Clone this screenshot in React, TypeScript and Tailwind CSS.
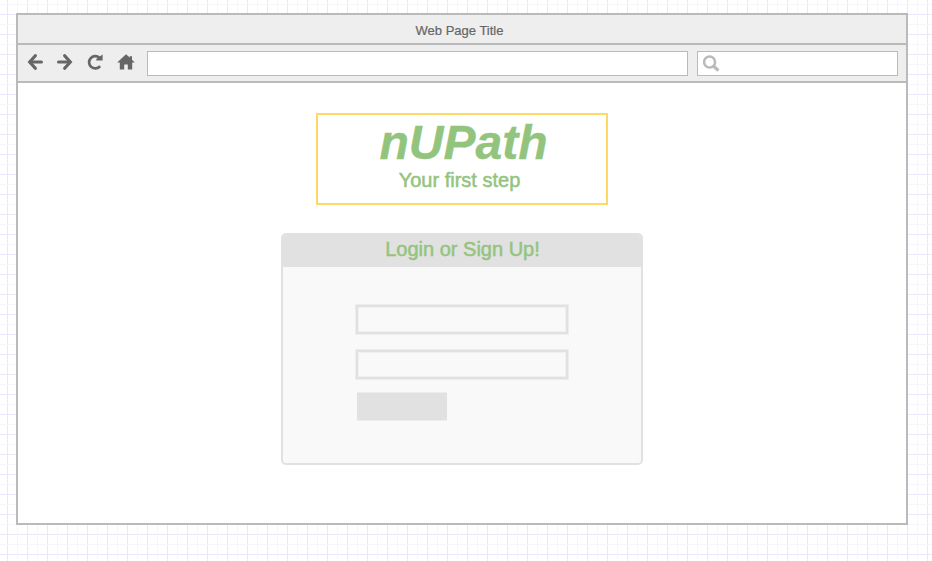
function BackArrow({ className = "" }: { className?: string }) {
  return (
    <svg className={className} width="16" height="16" viewBox="0 0 16 16" fill="none" stroke="#666" strokeWidth="3.2">
      <path d="M14.4 8H4" strokeLinecap="round" />
      <path d="M8.3 1.7 2.7 8l5.6 6.3" strokeLinejoin="miter" strokeLinecap="round" />
    </svg>
  );
}

function Reload() {
  return (
    <svg width="16" height="16" viewBox="0 0 16 16">
      <path d="M13.1 12.2A6.2 6.2 0 1 1 12.3 3.5" fill="none" stroke="#666" strokeWidth="2.7" />
      <path d="M15.6.6V6.5H9.3V5Z" fill="#666" />
    </svg>
  );
}

function Home() {
  return (
    <svg width="18" height="16" viewBox="0 0 18 16" fill="#666">
      <path d="M9 .2 12.7 3.6V2.2H15V5.8L17.8 8.6H15.2V15.6H10.8V10.4H7.2V15.6H2.8V8.6H.2Z" />
    </svg>
  );
}

function Search() {
  return (
    <svg width="17" height="17" viewBox="0 0 17 17" fill="none" stroke="#bababa">
      <circle cx="6.6" cy="7" r="5.5" strokeWidth="2.5" />
      <path d="m10.4 10.8 5 4.8" strokeWidth="3.2" />
    </svg>
  );
}

function Field() {
  return (
    <div className="h-[31px] w-[214px] border border-[#ededed]">
      <div className="h-full w-full border-2 border-[#e1e1e1] shadow-[inset_0_0_0_1px_#f0f0f0]" />
    </div>
  );
}

export default function App() {
  return (
    <div className="h-[561px] w-[932px] overflow-hidden bg-white bg-[linear-gradient(to_right,#f6f6fd_1px,transparent_1px),linear-gradient(to_bottom,#f6f6fd_1px,transparent_1px),linear-gradient(to_right,#e8e7fc_1px,transparent_1px),linear-gradient(to_bottom,#e8e7fc_1px,transparent_1px)] bg-[length:20px_20px] bg-[position:17px_4px,17px_4px,7px_14px,7px_14px] pt-[13px] pl-4 font-['Liberation_Sans',Arial,sans-serif]">
      <div className="flex h-[512px] w-[892px] flex-col border-2 border-[#bababa] bg-white">
        <header className="flex h-[30px] items-center justify-center border-b-2 border-[#bababa] bg-[#eee] pt-[3px] pr-[5px] text-[13px] text-[#666] [-webkit-text-stroke:0.2px_#666]">
          Web Page Title
        </header>
        <nav className="flex h-[38px] items-start border-b-2 border-[#bababa] bg-[#eee] pt-[6px] pl-[9px]">
          <div className="flex w-[120px] gap-[14px] pt-[3px]">
            <BackArrow />
            <BackArrow className="-scale-x-100" />
            <Reload />
            <Home />
          </div>
          <div className="h-[25px] w-[541px] border border-[#bababa] bg-white" />
          <div className="ml-[9px] h-[25px] w-[201px] border border-[#bababa] bg-white pt-[3px] pl-[5px]">
            <Search />
          </div>
        </nav>
        <main className="flex flex-1 flex-col items-center pt-[30px]">
          <div className="h-[92px] w-[292px] border-2 border-[#ffd966] pt-px text-center text-[#93c47d]">
            <h1 className="pl-[3px] text-[48px] leading-[54px] font-bold italic [-webkit-text-stroke:0.4px_#93c47d]">nUPath</h1>
            <p className="-mt-px pr-[5px] text-[20px] leading-[22px] [-webkit-text-stroke:0.5px_#93c47d]">Your first step</p>
          </div>
          <section className="mt-7 h-[232px] w-[362px] overflow-hidden rounded-[5px] border-2 border-[#e1e1e1] bg-[#f9f9f9]">
            <h2 className="h-8 bg-[#e1e1e1] pl-px text-center text-[20px] leading-7 text-[#93c47d] [-webkit-text-stroke:0.5px_#93c47d]">
              Login or Sign Up!
            </h2>
            <div className="flex flex-col gap-[14px] pt-[37px] pl-[72px]">
              <Field />
              <Field />
              <div className="-mt-[2px] ml-[2px] h-[29px] w-[90px] border-y border-[#ededed] bg-[#e1e1e1]" />
            </div>
          </section>
        </main>
      </div>
    </div>
  );
}
